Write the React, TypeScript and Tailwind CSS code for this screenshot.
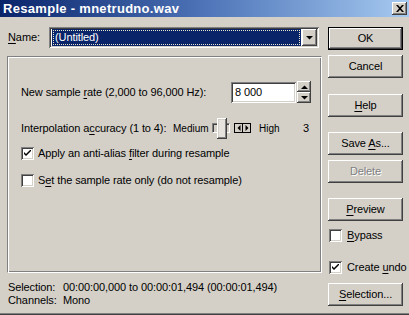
import React from "react";

const raised =
  "shadow-[inset_-1px_-1px_#404040,inset_1px_1px_#ffffff,inset_-2px_-2px_#808080,inset_2px_2px_#d4d0c8]";
const sunken =
  "shadow-[inset_1px_1px_#808080,inset_-1px_-1px_#ffffff,inset_2px_2px_#404040,inset_-2px_-2px_#d4d0c8]";

function U({ children }: { children: React.ReactNode }) {
  return <span className="underline underline-offset-[2px] decoration-1">{children}</span>;
}

function Button({
  children,
  def,
  disabled,
  className = "",
}: {
  children: React.ReactNode;
  def?: boolean;
  disabled?: boolean;
  className?: string;
}) {
  return (
    <div
      className={`h-[23px] w-[75px] shrink-0 flex items-center justify-center bg-[#d4d0c8] ${
        def ? "border border-black" : ""
      } ${raised} ${className}`}
    >
      <span
        className={
          disabled
            ? "text-[#808080] [text-shadow:1px_1px_0_#ffffff]"
            : "text-black"
        }
      >
        {children}
      </span>
    </div>
  );
}

function Checkbox({ checked }: { checked?: boolean }) {
  return (
    <div className={`w-[13px] h-[13px] bg-white shrink-0 flex items-center justify-center ${sunken}`}>
      {checked && (
        <svg width="7" height="7" viewBox="0 0 7 7">
          <path d="M0 2 L0 4 L2 6 L7 1 L7 -1 L2 4 Z" fill="#000" />
        </svg>
      )}
    </div>
  );
}

function Tri({ dir }: { dir: "up" | "down" }) {
  return (
    <svg width="7" height="4" viewBox="0 0 7 4">
      <path d={dir === "up" ? "M0 4 L7 4 L3.5 0.5 Z" : "M0 0 L7 0 L3.5 3.5 Z"} fill="#000" />
    </svg>
  );
}

export default function App() {
  return (
    <div
      className="w-[409px] h-[315px] bg-[#d4d0c8] flex flex-col overflow-hidden text-[11px] leading-[13px] tracking-[-0.1px] text-black shadow-[inset_0_-1px_#404040,inset_0_-2px_#808080]"
      style={{ fontFamily: "'Liberation Sans', Arial, sans-serif" }}
    >
      {/* Title bar */}
      <div className="h-[17px] shrink-0 bg-linear-to-r from-[#0a246a] via-[#4f74b8] to-[#a6caf0] flex items-center pl-[3px] pr-[2px]">
        <span className="text-white font-bold text-[13px] leading-[14px] tracking-[0.3px] flex-1">
          Resample - mnetrudno.wav
        </span>
        <div className={`w-[15px] h-[13px] shrink-0 bg-[#d4d0c8] flex items-center justify-center ${raised}`}>
          <svg width="8" height="7" viewBox="0 0 8 7">
            <path d="M0 0 L2 0 L4 2.2 L6 0 L8 0 L5 3.5 L8 7 L6 7 L4 4.8 L2 7 L0 7 L3 3.5 Z" fill="#000" />
          </svg>
        </div>
      </div>

      {/* Body */}
      <div className="flex flex-1">
        {/* Left column */}
        <div className="w-[322px] shrink-0 pl-[7px] flex flex-col">
          {/* Name row */}
          <div className="mt-[10px] h-[21px] flex items-center">
            <span className="w-[42px] shrink-0 pl-[1px]">
              <U>N</U>ame:
            </span>
            <div className={`w-[270px] h-[21px] shrink-0 bg-white flex items-center p-[2px] ${sunken}`}>
              <div className="flex-1 h-[17px] bg-[#0a246a] ml-[1px] mr-[1px] flex items-center">
                <div className="h-[15px] flex-1 mx-[1px] border border-dotted border-[#e8e4c8] flex items-center pl-[1px] text-white">
                  (Untitled)
                </div>
              </div>
              <div className={`w-[15px] h-[17px] bg-[#d4d0c8] flex items-center justify-center ${raised}`}>
                <Tri dir="down" />
              </div>
            </div>
          </div>

          {/* Group */}
          <div className="mt-[8px] w-[315px] h-[217px] shrink-0 border border-t-[#808080] border-l-[#808080] border-b-white border-r-white shadow-[inset_1px_1px_#ffffff,inset_-1px_-1px_#808080] flex flex-col pl-[13px]">
            {/* sample rate */}
            <div className="mt-[24px] h-[22px] flex items-center">
              <span className="w-[210px] shrink-0">
                New sample <U>r</U>ate (2,000 to 96,000 Hz):
              </span>
              <div className={`w-[65px] h-[21px] shrink-0 bg-white flex items-center pl-[4px] ${sunken}`}>8 000</div>
              <div className="w-[14px] h-[22px] shrink-0 ml-[1px] flex flex-col">
                <div className={`h-[11px] bg-[#d4d0c8] flex items-center justify-center ${raised}`}>
                  <Tri dir="up" />
                </div>
                <div className={`h-[11px] bg-[#d4d0c8] flex items-center justify-center ${raised}`}>
                  <Tri dir="down" />
                </div>
              </div>
            </div>

            {/* interpolation */}
            <div className="mt-[14px] h-[22px] flex items-center">
              <span className="w-[152px] shrink-0 whitespace-nowrap">
                Interpolation a<U>c</U>curacy (1 to 4):
              </span>
              <span className="w-[39px] shrink-0 text-[10px] tracking-normal whitespace-nowrap">Medium</span>
              <div className="relative w-[18px] h-[22px] shrink-0 flex items-center">
                <div className="w-[18px] h-[10px] bg-[#d4d0c8] border border-t-[#808080] border-l-[#808080] border-b-white border-r-white shadow-[inset_1px_1px_#404040]" />
                <div className={`absolute left-[5px] top-[1px] w-[10px] h-[21px] bg-[#e6e3de] ${raised}`} />
              </div>
              <div className="ml-[4px] h-[10px] shrink-0 flex border border-black bg-black gap-[1px]">
                <div className="w-[7px] h-[8px] bg-[#d4d0c8] flex items-center justify-center">
                  <svg width="4" height="6" viewBox="0 0 4 6"><path d="M3.5 0 L3.5 6 L0.5 3 Z" fill="#000" /></svg>
                </div>
                <div className="w-[7px] h-[8px] bg-[#d4d0c8] flex items-center justify-center">
                  <svg width="4" height="6" viewBox="0 0 4 6"><path d="M0.5 0 L0.5 6 L3.5 3 Z" fill="#000" /></svg>
                </div>
              </div>
              <span className="ml-[8px] w-[44px] shrink-0 text-[10px] tracking-normal">High</span>
              <span>3</span>
            </div>

            {/* checkbox 1 */}
            <div className="mt-[8px] h-[13px] flex items-center">
              <Checkbox checked />
              <span className="ml-[4px]">
                Apply an anti-alias <U>f</U>ilter during resample
              </span>
            </div>
            {/* checkbox 2 */}
            <div className="mt-[14px] h-[13px] flex items-center">
              <Checkbox />
              <span className="ml-[4px]">
                S<U>e</U>t the sample rate only (do not resample)
              </span>
            </div>
          </div>

          {/* info */}
          <div className="mt-[8px] pl-[1px] flex flex-col">
            <div className="flex h-[13px]">
              <span className="w-[55px] shrink-0">Selection:</span>
              <span>00:00:00,000 to 00:00:01,494 (00:00:01,494)</span>
            </div>
            <div className="flex h-[13px]">
              <span className="w-[55px] shrink-0">Channels:</span>
              <span>Mono</span>
            </div>
          </div>
        </div>

        {/* Right column */}
        <div className="ml-[6px] w-[75px] shrink-0 flex flex-col">
          <Button def className="mt-[10px]">OK</Button>
          <Button className="mt-[5px]">Cancel</Button>
          <Button className="mt-[16px]">
            <U>H</U>elp
          </Button>
          <Button className="mt-[15px]">
            Save <U>A</U>s...
          </Button>
          <Button className="mt-[5px]" disabled>
            Delete
          </Button>
          <Button className="mt-[15px]">
            <U>P</U>review
          </Button>
          <div className="mt-[8px] h-[13px] flex items-center pl-[1px]">
            <Checkbox />
            <span className="ml-[5px]">
              <U>B</U>ypass
            </span>
          </div>
          <div className="mt-[19px] h-[13px] flex items-center pl-[1px]">
            <Checkbox checked />
            <span className="ml-[5px] whitespace-nowrap">
              Create <U>u</U>ndo
            </span>
          </div>
          <Button className="mt-[9px]">
            <U>S</U>election...
          </Button>
        </div>
      </div>
    </div>
  );
}
